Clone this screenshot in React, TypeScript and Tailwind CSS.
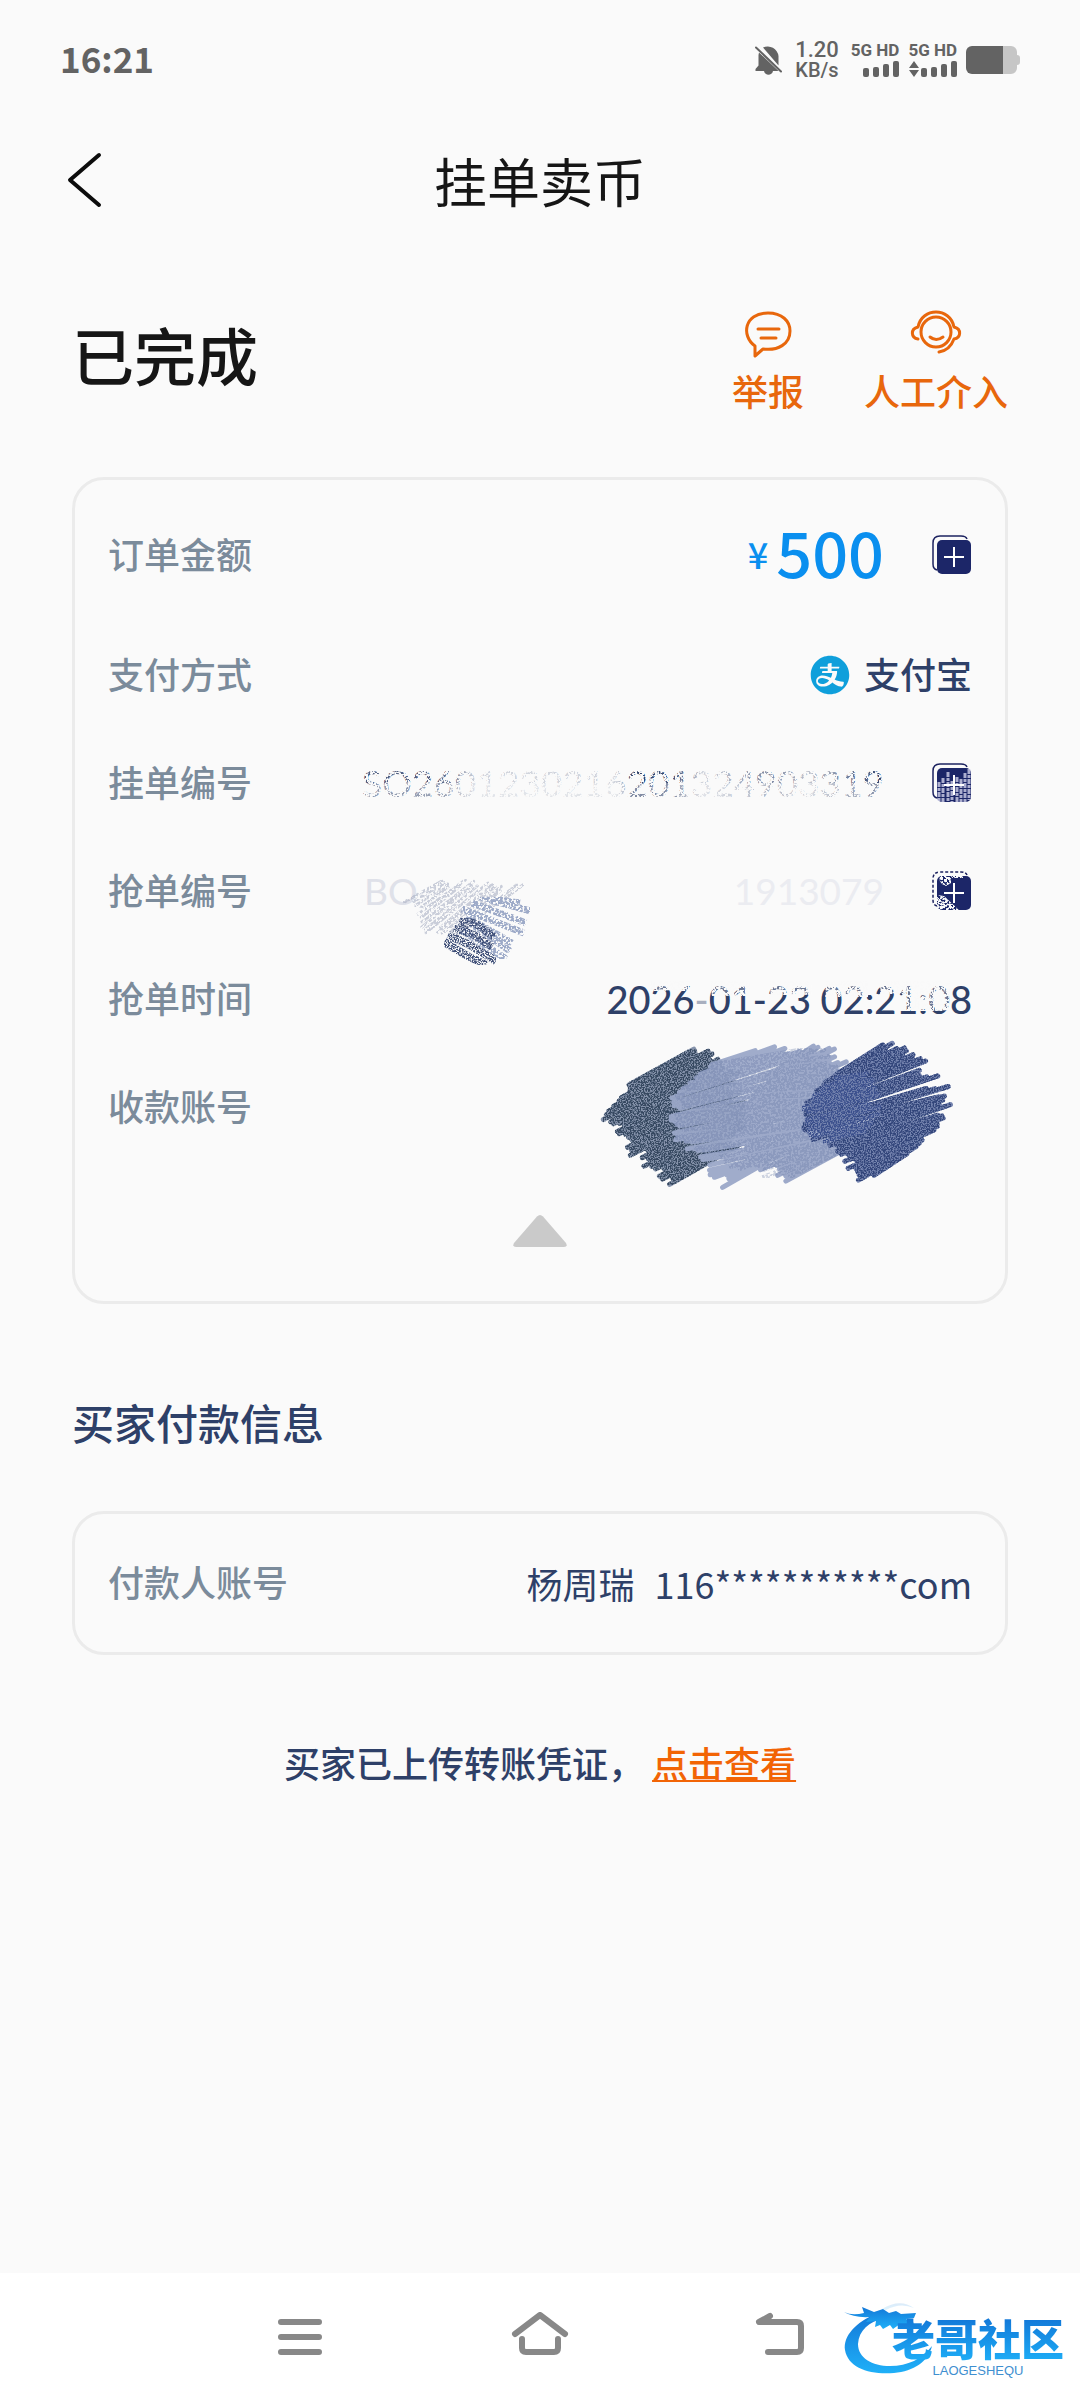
import type { ReactNode } from "react";
import { AiFillAlipayCircle } from "react-icons/ai";

type Point = [number, number];

interface ScribbleProps {
  starts: Point[];
  ends: Point[];
  count: number;
  color: string;
  width?: number;
  seed?: number;
}

// Point at t (0..1) along a polyline
const pointAt = (line: Point[], t: number): Point => {
  const pos = t * (line.length - 1);
  const i = Math.min(Math.floor(pos), line.length - 2);
  const f = pos - i;
  return [
    line[i][0] + (line[i + 1][0] - line[i][0]) * f,
    line[i][1] + (line[i + 1][1] - line[i][1]) * f,
  ];
};

const jitter = (n: number) => {
  const v = Math.sin(n * 127.1) * 43758.5453;
  return (v - Math.floor(v)) * 2 - 1;
};

function Scribble({ starts, ends, count, color, width = 5, seed = 1 }: ScribbleProps) {
  const lines = Array.from({ length: count }, (_, i) => {
    const t = i / (count - 1);
    const [x1, y1] = pointAt(starts, t);
    const [x2, y2] = pointAt(ends, t);
    const a = jitter(seed + i) * 8;
    const b = jitter(seed + i + 50) * 8;
    return `M${x1 + a} ${y1 - a * 0.6}L${x2 + b} ${y2 - b * 0.6}`;
  });
  return (
    <path d={lines.join("")} stroke={color} strokeWidth={width} strokeLinecap="round" fill="none" />
  );
}

function Filters() {
  return (
    <svg width="0" height="0" className="absolute" aria-hidden="true">
      <defs>
        <filter id="speckle" x="0" y="0" width="100%" height="100%">
          <feTurbulence type="fractalNoise" baseFrequency="0.45" numOctaves="2" seed="4" />
          <feColorMatrix values="0 0 0 0 0  0 0 0 0 0  0 0 0 0 0  9 0 0 0 -3.7" result="n" />
          <feComposite in="SourceGraphic" in2="n" operator="in" />
        </filter>
        <filter id="grain" x="0" y="0" width="100%" height="100%">
          <feTurbulence type="fractalNoise" baseFrequency="0.7" numOctaves="2" seed="9" />
          <feColorMatrix values="0 0 0 0 0  0 0 0 0 0  0 0 0 0 0  5 0 0 0 -1.9" result="n" />
          <feComposite in="SourceGraphic" in2="n" operator="in" />
        </filter>
        <linearGradient id="orderFade" x1="0" x2="1" y1="0" y2="0">
          <stop offset="0" stopColor="#fafafa" stopOpacity="0.15" />
          <stop offset="0.15" stopColor="#fafafa" stopOpacity="0.2" />
          <stop offset="0.22" stopColor="#fafafa" stopOpacity="0.8" />
          <stop offset="0.49" stopColor="#fafafa" stopOpacity="0.8" />
          <stop offset="0.52" stopColor="#fafafa" stopOpacity="0" />
          <stop offset="0.6" stopColor="#fafafa" stopOpacity="0.1" />
          <stop offset="0.65" stopColor="#fafafa" stopOpacity="0.8" />
          <stop offset="0.78" stopColor="#fafafa" stopOpacity="0.4" />
          <stop offset="0.86" stopColor="#fafafa" stopOpacity="0.7" />
          <stop offset="0.94" stopColor="#fafafa" stopOpacity="0.3" />
          <stop offset="1" stopColor="#fafafa" stopOpacity="0" />
        </linearGradient>
        <linearGradient id="dragon" x1="0" x2="0" y1="0" y2="1">
          <stop offset="0" stopColor="#1478d8" />
          <stop offset="1" stopColor="#1fb0f8" />
        </linearGradient>
      </defs>
    </svg>
  );
}

function StatusBar() {
  return (
    <div className="flex h-[120px] items-center justify-between pr-[60px] pl-[60px] text-[#636363]">
      <span className="pb-1 text-[35px] leading-[40px] font-bold">16:21</span>
      <div className="flex items-center">
        <svg viewBox="0 0 28 32" className="mr-3 h-8 w-7" fill="currentColor">
          <path d="M8 3.5a11 11 0 0 1 15.500 8.500v9.500L8 3.500zM4 8.500 23.500 27h-5.500c-1 5-8 5-9 0H0.500v-2L3.500 21.500V11z" />
          <path d="M1 3.500 26 27.500" stroke="currentColor" strokeWidth="2" strokeLinecap="round" />
        </svg>
        <div className="mr-3 flex flex-col items-center font-[Roboto,sans-serif] leading-[20px] font-medium">
          <span className="text-[22px]">1.20</span>
          <span className="text-[20px]">KB/s</span>
        </div>
        <SignalBlock />
        <SignalBlock arrows />
        <svg viewBox="0 0 54 28" className="h-7 w-[54px]">
          <path d="M37 0h8a6 6 0 0 1 6 6v3q3 0 3 3v4q0 3-3 3v3a6 6 0 0 1-6 6h-8z" fill="#c6c6c6" />
          <path d="M37 0H6a6 6 0 0 0-6 6v16a6 6 0 0 0 6 6h31z" fill="#636363" />
        </svg>
      </div>
    </div>
  );
}

function SignalBlock({ arrows = false }: { arrows?: boolean }) {
  return (
    <div className="mr-[9px] flex flex-col items-end gap-[2px]">
      <span className="font-[Roboto,sans-serif] text-[17px] leading-[16px] font-bold">5G HD</span>
      <svg viewBox="0 0 48 18" className="h-[18px] w-12" fill="currentColor">
        {arrows && <path d="M5 1l5 7H0zM5 17l5-7H0z" />}
        <rect x="12" y="8" width="6" height="9" rx="2" />
        <rect x="22" y="7" width="6" height="10" rx="2" />
        <rect x="32" y="4" width="6" height="13" rx="2" />
        <rect x="42" y="1" width="6" height="16" rx="2" />
      </svg>
    </div>
  );
}

function Action({ label, children }: { label: string; children: ReactNode }) {
  return (
    <button className="flex flex-col items-center gap-[10px] text-[#e8670c]">
      <svg
        viewBox="0 0 52 48"
        className="h-12 w-[52px]"
        fill="none"
        stroke="currentColor"
        strokeWidth="3"
        strokeLinecap="round"
        strokeLinejoin="round"
      >
        {children}
      </svg>
      <span className="text-[36px] leading-[44px] font-medium">{label}</span>
    </button>
  );
}

function Row({ label, children }: { label: string; children?: ReactNode }) {
  return (
    <div className="flex h-[108px] items-center justify-between">
      <span className="pb-1 font-medium text-[#7b8b9b]">{label}</span>
      <div className="flex items-center text-[#2e4068]">{children}</div>
    </div>
  );
}

function CopyButton({ label, worn }: { label: string; worn?: "full" | "corner" }) {
  return (
    <button aria-label={label} className="ml-12">
      <svg viewBox="0 0 40 40" className="h-10 w-10" fill="none">
        <path
          d="M5 35Q1 34 1 29V8Q1 1 8 1H29Q34 1 35 4"
          stroke="#1d2360"
          strokeWidth="1.500"
          strokeDasharray={worn === "corner" ? "3 2" : undefined}
        />
        <rect x="5" y="5" width="34" height="34" rx="5" fill="#1c2668" />
        {worn === "full" && (
          <path
            d="M7 19v19M11 15v24M16 9v30M20 18v21M25 14v25M29 16v23M33 10v29M37 6v31"
            stroke="#dcdcf2"
            strokeOpacity="0.75"
            strokeWidth="3"
            strokeDasharray="5 1 3 1"
          />
        )}
        {worn === "corner" && (
          <g filter="url(#speckle)">
            <path d="M5 24 12 25 27 39H5zM7 5h12v7l-5 3-4-2-3-4zM19 5h12v2H20z" fill="#fafafa" />
          </g>
        )}
        <path d="M12 22H32M22 12V32" stroke="#fff" strokeWidth="2" />
      </svg>
    </button>
  );
}

function OrderNumber() {
  return (
    <span className="relative font-[Lato,'Noto_Sans_CJK_SC',sans-serif] text-[37px] leading-[48px] font-medium">
      SO2601230216201324903319
      <svg className="absolute inset-0 h-full w-full" aria-hidden="true">
        <rect width="100%" height="100%" fill="url(#orderFade)" />
        <rect y="24" width="100%" height="24" fill="#fafafa" fillOpacity="0.4" />
        <rect width="100%" height="100%" fill="#fafafa" filter="url(#speckle)" />
      </svg>
    </span>
  );
}

function GrabNumber() {
  return (
    <span className="relative flex w-[520px] items-center justify-between font-[Lato,'Noto_Sans_CJK_SC',sans-serif] text-[37px] leading-[48px]">
      <span className="text-[#dfe1e9]">BO</span>
      <svg viewBox="0 0 160 160" className="absolute left-[30px] h-[160px] w-[160px]" aria-hidden="true">
        <g filter="url(#speckle)" opacity="0.6">
          <Scribble
            starts={[[12, 90], [34, 115], [60, 126]]}
            ends={[[48, 70], [80, 75], [122, 78]]}
            count={16}
            color="#a9b0c4"
            width={3}
          />
        </g>
        <g filter="url(#speckle)">
          <path
            d="M68 98 130 122M78 92 132 112M72 106 118 132M86 86 136 100M76 112 116 140M66 118 112 148M96 88 126 92"
            stroke="#9daac8"
            strokeWidth="7"
            fill="none"
          />
        </g>
        <g filter="url(#grain)">
          <path
            d="M66 107 84 114 100 126M60 117 80 124 98 136M54 124 76 134 102 150M50 131 70 143 92 154M66 112 74 122"
            stroke="#3f5078"
            strokeWidth="8"
            fill="none"
          />
        </g>
      </svg>
      <span className="text-[#ebecf1]">1913079</span>
    </span>
  );
}

function GrabTime() {
  return (
    <span className="relative font-[Lato,'Noto_Sans_CJK_SC',sans-serif] text-[38px] leading-[48px] font-medium">
      2026-01-23 02:21:08
      <svg viewBox="0 0 360 48" preserveAspectRatio="none" className="absolute inset-0 h-full w-full" aria-hidden="true">
        <path
          d="M44 6h38v10H44zM104 6h38v15h-38zM162 6h40v14h-40zM216 6h42v16h-42zM270 6h22v13h-22zM292 6h46v30h-46z"
          fill="#fafafa"
          fillOpacity="0.3"
        />
        <path
          d="M44 6h38v10H44zM104 6h38v15h-38zM162 6h40v14h-40zM216 6h42v16h-42zM270 6h22v13h-22zM292 6h46v30h-46z"
          fill="#fafafa"
          filter="url(#speckle)"
        />
        <path d="M86 20h16v14H86z" fill="#fafafa" fillOpacity="0.6" />
      </svg>
    </span>
  );
}

function HiddenAccount() {
  return (
    <svg viewBox="0 0 376 176" className="h-[176px] w-[376px]" aria-hidden="true">
      <Scribble
        starts={[[36, 64], [14, 94], [24, 116], [50, 140], [76, 164]]}
        ends={[[98, 30], [114, 42], [138, 62], [144, 94], [136, 130]]}
        count={34}
        color="#8592aa"
      />
      <g filter="url(#grain)">
        <Scribble
          starts={[[36, 64], [14, 94], [24, 116], [50, 140], [76, 164]]}
          ends={[[98, 30], [114, 42], [138, 62], [144, 94], [136, 130]]}
          count={34}
          color="#34475f"
        />
      </g>
      <g opacity="0.94">
        <Scribble
          starts={[[112, 48], [82, 76], [74, 104], [92, 122], [112, 140], [134, 164]]}
          ends={[[162, 30], [200, 36], [232, 70], [234, 100], [214, 124], [176, 140]]}
          count={38}
          color="#9ba8c9"
          seed={3}
        />
        <Scribble
          starts={[[176, 54], [150, 84], [140, 110], [160, 136], [190, 162]]}
          ends={[[216, 28], [246, 42], [260, 70], [266, 100], [252, 128]]}
          count={34}
          color="#98a5c7"
          seed={12}
        />
      </g>
      <g filter="url(#speckle)" opacity="0.3">
        <Scribble
          starts={[[112, 48], [82, 76], [88, 122], [190, 160]]}
          ends={[[216, 28], [252, 70], [266, 100], [252, 128]]}
          count={40}
          color="#6577a4"
          seed={3}
        />
      </g>
      <Scribble
        starts={[[236, 58], [212, 86], [216, 108], [246, 136], [272, 160]]}
        ends={[[290, 24], [318, 42], [346, 74], [350, 98], [312, 134]]}
        count={36}
        color="#7483ae"
        seed={20}
      />
      <g filter="url(#grain)">
        <Scribble
          starts={[[236, 58], [212, 86], [216, 108], [246, 136], [272, 160]]}
          ends={[[290, 24], [318, 42], [346, 74], [350, 98], [312, 134]]}
          count={36}
          color="#32457a"
          seed={20}
        />
        <Scribble
          starts={[[236, 62], [212, 86], [216, 108], [240, 120]]}
          ends={[[266, 54], [274, 72], [276, 92], [272, 110]]}
          count={22}
          color="#3a4f8c"
          seed={20}
        />
      </g>
    </svg>
  );
}

function Watermark() {
  return (
    <div className="pointer-events-none absolute right-[16px] bottom-[20px] h-[84px] w-[222px]">
      <svg viewBox="0 0 222 84" className="absolute inset-0 h-full w-full" fill="url(#dragon)">
        <path d="M34 18C14 26 1 40 3 54 6 72 28 79 52 77 72 75 86 66 90 50 80 63 66 70 48 70 30 70 16 62 16 48 17 34 27 26 42 22z" />
        <path d="M2 16Q10 20 22 17L20 11 32 16 41 13 47 17 54 15 59 18 74 17 72 22 64 23 72 27 69 30 58 28 51 33 48 29 41 33 38 29 33 31 34 25 24 26 28 21Q12 22 2 16z" />
        <path d="M40 13Q58 2 72 12Q58 6 44 14z" opacity="0.15" />
      </svg>
      <div className="absolute right-0 bottom-[2px] flex flex-col items-center">
        <span className="bg-gradient-to-b from-[#1478d8] to-[#1fb0f8] bg-clip-text font-['Liberation_Sans','Noto_Sans_CJK_SC',sans-serif] text-[43px] leading-[46px] font-black text-transparent">
          老哥社区
        </span>
        <span className="font-['Liberation_Sans',sans-serif] text-[13px] leading-[14px] text-[#3f8fd0]">
          LAOGESHEQU
        </span>
      </div>
    </div>
  );
}

function NavBar() {
  return (
    <nav className="relative flex h-[127px] items-center justify-center bg-white pb-1 text-[#888]">
      <button aria-label="最近任务" className="flex w-60 justify-center">
        <NavIcon>
          <path d="M10 10H48M10 25H48M10 40H48" />
        </NavIcon>
      </button>
      <button aria-label="主页" className="flex w-60 justify-center">
        <NavIcon>
          <path d="M4 22 29 3 54 22M11 27V36Q11 40 15 40H43Q47 40 47 36V27" />
        </NavIcon>
      </button>
      <button aria-label="返回" className="flex w-60 justify-center">
        <NavIcon>
          <path d="M19 4 8 10H46Q50 10 50 14V36Q50 40 46 40H17" />
        </NavIcon>
      </button>
      <Watermark />
    </nav>
  );
}

function NavIcon({ children }: { children: ReactNode }) {
  return (
    <svg
      viewBox="0 0 58 46"
      className="h-[46px] w-[58px]"
      fill="none"
      stroke="currentColor"
      strokeWidth="6"
      strokeLinecap="round"
      strokeLinejoin="round"
    >
      {children}
    </svg>
  );
}

export default function App() {
  return (
    <div className="flex min-h-screen flex-col bg-[#fafafa] font-['Noto_Sans_CJK_SC',sans-serif]">
      <Filters />
      <StatusBar />

      <header className="relative flex h-[120px] items-center justify-center">
        <button aria-label="返回" className="absolute left-[66px]">
          <svg viewBox="0 0 36 56" className="h-14 w-9" fill="none" stroke="#0c0c0c" strokeWidth="4" strokeLinecap="round" strokeLinejoin="round">
            <path d="M33 3 4 28 33 53" />
          </svg>
        </button>
        <h1 className="text-[53px] leading-[64px] text-[#161616]">挂单卖币</h1>
      </header>

      <main className="flex flex-1 flex-col px-[72px] text-[36px] leading-[48px]">
        <section className="mt-[70px] mb-[65px] flex items-start justify-between">
          <h2 className="text-[62px] leading-[88px] font-medium text-[#161616]">已完成</h2>
          <div className="flex gap-[60px]">
            <Action label="举报">
              <path d="M13 36C-1 26 2 3 26 3c14 0 22 8 22 18 0 13-12 20-27 18L13 46z" />
              <path d="M16 19H37M19 28H34" />
            </Action>
            <Action label="人工介入">
              <circle cx="26" cy="22" r="15" />
              <path d="M8 29C1 28 0 19 8 17 12-3 40-3 44 17c8 2 7 11 0 12-3 8-8 12-15 13M20 27q6 5 13 0" />
            </Action>
          </div>
        </section>

        <section className="rounded-[32px] border-[3px] border-[#ebebeb] px-[33px] pt-[9px]">
          <div className="flex h-[132px] items-center justify-between">
            <span className="pb-1 font-medium text-[#7b8b9b]">订单金额</span>
            <div className="flex items-center text-[#0a8fef]">
              <span className="mr-2 pb-1 font-medium">¥</span>
              <span className="pb-2 text-[63px] leading-[72px] font-medium">500</span>
              <CopyButton label="复制金额" />
            </div>
          </div>
          <Row label="支付方式">
            <AiFillAlipayCircle className="mr-3 size-11 text-[#0f9fdb]" />
            <span className="pb-1 font-medium">支付宝</span>
          </Row>
          <Row label="挂单编号">
            <OrderNumber />
            <CopyButton label="复制挂单编号" worn="full" />
          </Row>
          <Row label="抢单编号">
            <GrabNumber />
            <CopyButton label="复制抢单编号" worn="corner" />
          </Row>
          <Row label="抢单时间">
            <GrabTime />
          </Row>
          <Row label="收款账号">
            <HiddenAccount />
          </Row>
          <button aria-label="收起" className="flex h-[140px] w-full items-center justify-center">
            <svg viewBox="0 0 54 32" className="h-8 w-[54px]" fill="#cacaca">
              <path d="M24 1.500Q27-1.500 30 1.500L53 28Q55 32 51 32H3Q-1 32 1 28z" />
            </svg>
          </button>
        </section>

        <h3 className="mt-[90px] mb-[61px] text-[42px] leading-[56px] font-medium text-[#2e4068]">买家付款信息</h3>

        <section className="flex h-[144px] items-center justify-between rounded-[32px] border-[3px] border-[#ebebeb] px-[33px]">
          <span className="pb-1 font-medium text-[#7b8b9b]">付款人账号</span>
          <span className="flex gap-5 text-[#2e4068]">
            <span>杨周瑞</span>
            <span>116***********com</span>
          </span>
        </section>

        <p className="mt-[83px] text-center font-medium text-[#2e4068]">
          买家已上传转账凭证，{" "}
          <a href="#voucher" className="text-[#f26405] underline decoration-2 underline-offset-2">
            点击查看
          </a>
        </p>
      </main>

      <NavBar />
    </div>
  );
}
